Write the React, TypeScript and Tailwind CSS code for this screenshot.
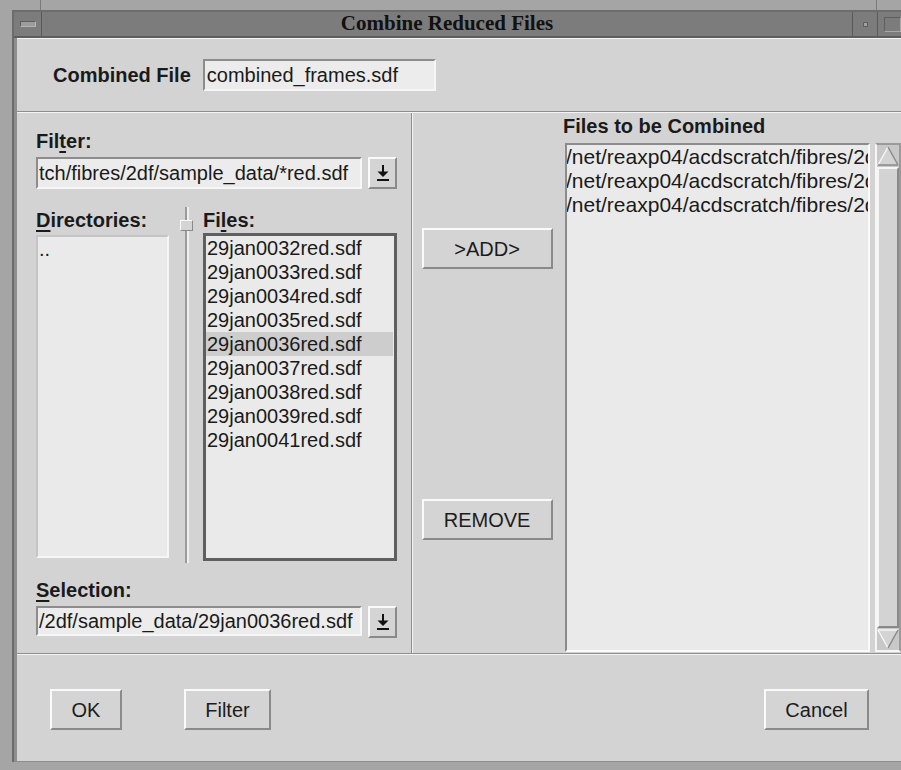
import React from 'react';

const files = [
  '29jan0032red.sdf',
  '29jan0033red.sdf',
  '29jan0034red.sdf',
  '29jan0035red.sdf',
  '29jan0036red.sdf',
  '29jan0037red.sdf',
  '29jan0038red.sdf',
  '29jan0039red.sdf',
  '29jan0041red.sdf',
];

const combined = [
  '/net/reaxp04/acdscratch/fibres/2df/sample_data/29jan0032red.sdf',
  '/net/reaxp04/acdscratch/fibres/2df/sample_data/29jan0033red.sdf',
  '/net/reaxp04/acdscratch/fibres/2df/sample_data/29jan0034red.sdf',
];

// raised Motif-style push button
function Button({ label, className }: { label: string; className: string }) {
  return (
    <div
      className={`flex items-center justify-center h-[41px] bg-[#d4d4d4] border-2 border-t-[#fafafa] border-l-[#fafafa] border-b-[#8a8a8a] border-r-[#8a8a8a] text-[20px] text-[#1c1c1c] ${className}`}
    >
      {label}
    </div>
  );
}

// sunken text field
function Field({ value, className }: { value: string; className: string }) {
  return (
    <div
      className={`flex items-center overflow-hidden whitespace-nowrap bg-[#ececec] border-2 border-t-[#8c8c8c] border-l-[#8c8c8c] border-b-[#f6f6f6] border-r-[#f6f6f6] pl-[1px] text-[20px] text-[#1a1a1a] ${className}`}
    >
      {value}
    </div>
  );
}

function DropButton() {
  return (
    <div className="flex items-center justify-center w-[29px] h-[32px] bg-[#d4d4d4] border-2 border-t-[#fafafa] border-l-[#fafafa] border-b-[#8a8a8a] border-r-[#8a8a8a]">
      <svg width="12" height="16" viewBox="0 0 12 16">
        <rect x="5" y="0" width="2" height="8" fill="#111" />
        <polygon points="0.5,6.5 11.5,6.5 6,12" fill="#111" />
        <rect x="0" y="14" width="12" height="2" fill="#111" />
      </svg>
    </div>
  );
}

function Label({ pre, key1, post }: { pre: string; key1: string; post: string }) {
  return (
    <div className="h-[24px] leading-[24px] text-[20px] font-bold text-[#1a1a1a]">
      {pre}
      <span className="underline decoration-[2px] underline-offset-[3px]">{key1}</span>
      {post}
    </div>
  );
}

export default function App() {
  return (
    <div className="w-[901px] h-[770px] bg-[#a5a5a5] flex flex-col pb-[8px] overflow-hidden [font-family:'Liberation_Sans',Arial,sans-serif]">
      {/* top frame strip */}
      <div className="h-[10px] flex">
        <div className="w-[41px] border-r border-[#7a7a7a]" />
        <div className="flex-1" />
        <div className="w-[25px] border-l border-[#7a7a7a]" />
      </div>

      <div className="flex-1 flex flex-col ml-[12px] border-t-2 border-l-2 border-[#6c6c6c]">
        {/* title bar */}
        <div className="h-[26px] flex bg-[#7c7c7c] border-b-2 border-[#5e5e5e]">
          <div className="w-[28px] flex items-center justify-center border-r border-[#5a5a5a]">
            <div className="w-[16px] h-[6px] bg-[#9c9c9c] border border-t-[#5e5e5e] border-l-[#5e5e5e] border-b-[#b4b4b4] border-r-[#b4b4b4]" />
          </div>
          <div className="flex-1 flex items-center justify-center text-[21px] font-bold text-[#111] [font-family:'Liberation_Serif','Times_New_Roman',serif]">
            Combine Reduced Files
          </div>
          <div className="w-[25px] flex items-center justify-center border-l border-[#5a5a5a]">
            <div className="w-[5px] h-[5px] bg-[#a0a0a0] border border-[#5e5e5e]" />
          </div>
          <div className="w-[24px] flex items-center justify-end border-l border-[#5a5a5a]">
            <div className="w-[17px] h-[15px] border border-t-[#5e5e5e] border-l-[#5e5e5e] border-b-[#a8a8a8] border-r-[#a8a8a8]" />
          </div>
        </div>

        {/* dialog body */}
        <div className="flex-1 flex flex-col bg-[#d3d3d3] border-l-[3px] border-l-[#8e8e8e]">
          {/* combined file name */}
          <div className="h-[74px] flex items-center pl-[36px] gap-[12px] border-t border-t-[#f4f4f4] border-b border-b-[#8d8d8d]">
            <div className="text-[20px] font-bold text-[#1a1a1a]">Combined File</div>
            <Field value="combined_frames.sdf" className="w-[233px] h-[32px] pl-[2px]" />
          </div>

          {/* file selection area */}
          <div className="h-[542px] flex border-t border-t-[#f4f4f4] border-b border-b-[#8d8d8d]">
            {/* file selection box */}
            <div className="w-[396px] flex flex-col pl-[19px] pt-[16px] border-r border-r-[#8c8c8c]">
              <Label pre="Fil" key1="t" post="er:" />
              <div className="flex gap-[6px] mt-[4px]">
                <Field value="tch/fibres/2df/sample_data/*red.sdf" className="w-[326px] h-[32px]" />
                <DropButton />
              </div>

              <div className="flex mt-[18px] h-[356px]">
                <div className="w-[133px] flex flex-col pt-[1px]">
                  <Label pre="" key1="D" post="irectories:" />
                  <div className="mt-[3px] h-[323px] bg-[#eaeaea] border-2 border-t-[#c4c4c4] border-l-[#c4c4c4] border-b-[#f6f6f6] border-r-[#f6f6f6] text-[20px] leading-[24px] text-[#1a1a1a] pl-[1px]">
                    ..
                  </div>
                </div>

                {/* pane sash */}
                <div className="ml-[11px] w-[13px] flex flex-col items-center">
                  <div className="w-[4px] h-[13px] border-l-2 border-l-[#9a9a9a] border-r-2 border-r-[#efefef]" />
                  <div className="w-[13px] h-[11px] bg-[#d4d4d4] border border-t-[#fafafa] border-l-[#fafafa] border-b-[#8a8a8a] border-r-[#8a8a8a]" />
                  <div className="flex-1 w-[4px] border-l-2 border-l-[#9a9a9a] border-r-2 border-r-[#efefef]" />
                </div>

                <div className="ml-[10px] w-[194px] flex flex-col pt-[1px]">
                  <Label pre="Fi" key1="l" post="es:" />
                  <div className="mt-[1px] h-[328px] bg-[#eaeaea] border-[3px] border-[#5f5f5f] overflow-hidden">
                    {files.map((f) => (
                      <div
                        key={f}
                        className={`h-[24px] leading-[24px] text-[20px] text-[#1a1a1a] pl-[1px] ${f === '29jan0036red.sdf' ? 'bg-[#cdcdcd] mr-[1px]' : ''}`}
                      >
                        {f}
                      </div>
                    ))}
                  </div>
                </div>
              </div>

              <div className="mt-[15px]">
                <Label pre="" key1="S" post="election:" />
              </div>
              <div className="flex gap-[6px] mt-[4px]">
                <Field value="/2df/sample_data/29jan0036red.sdf" className="w-[326px] h-[30px]" />
                <DropButton />
              </div>
            </div>

            {/* add / remove */}
            <div className="w-[150px] flex flex-col pl-[9px] pt-[115px] border-l border-l-[#f4f4f4]">
              <Button label=">ADD>" className="w-[131px]" />
              <Button label="REMOVE" className="w-[131px] mt-[230px]" />
            </div>

            {/* files to be combined */}
            <div className="flex-1 flex flex-col pl-[2px] pt-[1px]">
              <div className="h-[24px] leading-[24px] text-[20px] font-bold text-[#1a1a1a]">Files to be Combined</div>
              <div className="flex mt-[5px] ml-[2px]">
                <div className="w-[305px] h-[509px] bg-[#eaeaea] border-2 border-t-[#8c8c8c] border-l-[#8c8c8c] border-b-[#fafafa] border-r-[#fafafa] overflow-hidden">
                  {combined.map((c) => (
                    <div key={c} className="h-[24px] leading-[24px] text-[21px] text-[#1a1a1a] whitespace-nowrap -ml-[1px]">
                      {c}
                    </div>
                  ))}
                </div>
                <div className="ml-[5px] w-[26px] h-[509px] flex flex-col bg-[#c8c8c8] border-2 border-t-[#9a9a9a] border-l-[#f6f6f6] border-b-[#f6f6f6] border-r-[#9a9a9a]">
                  <svg width="22" height="22" viewBox="0 0 22 22">
                    <polygon points="11,2 21,20 1,20" fill="#d3d3d3" />
                    <line x1="11" y1="2" x2="1" y2="20" stroke="#f6f6f6" strokeWidth="1.5" />
                    <line x1="11" y1="2" x2="21" y2="20" stroke="#8a8a8a" strokeWidth="1.5" />
                    <line x1="1" y1="20" x2="21" y2="20" stroke="#8a8a8a" strokeWidth="1.5" />
                  </svg>
                  <div className="flex-1 bg-[#d3d3d3] border-2 border-t-[#f6f6f6] border-l-[#f6f6f6] border-b-[#8a8a8a] border-r-[#8a8a8a]" />
                  <svg width="22" height="22" viewBox="0 0 22 22">
                    <polygon points="1,2 21,2 11,20" fill="#d3d3d3" />
                    <line x1="1" y1="2" x2="21" y2="2" stroke="#f6f6f6" strokeWidth="1.5" />
                    <line x1="1" y1="2" x2="11" y2="20" stroke="#f6f6f6" strokeWidth="1.5" />
                    <line x1="21" y1="2" x2="11" y2="20" stroke="#8a8a8a" strokeWidth="1.5" />
                  </svg>
                </div>
              </div>
            </div>
          </div>

          {/* action buttons */}
          <div className="flex-1 flex items-start pt-[34px] pl-[33px] pr-[32px] border-t border-t-[#f4f4f4] border-b border-b-[#8d8d8d]">
            <Button label="OK" className="w-[72px]" />
            <Button label="Filter" className="w-[87px] ml-[62px]" />
            <div className="flex-1" />
            <Button label="Cancel" className="w-[105px]" />
          </div>
        </div>
      </div>
    </div>
  );
}
